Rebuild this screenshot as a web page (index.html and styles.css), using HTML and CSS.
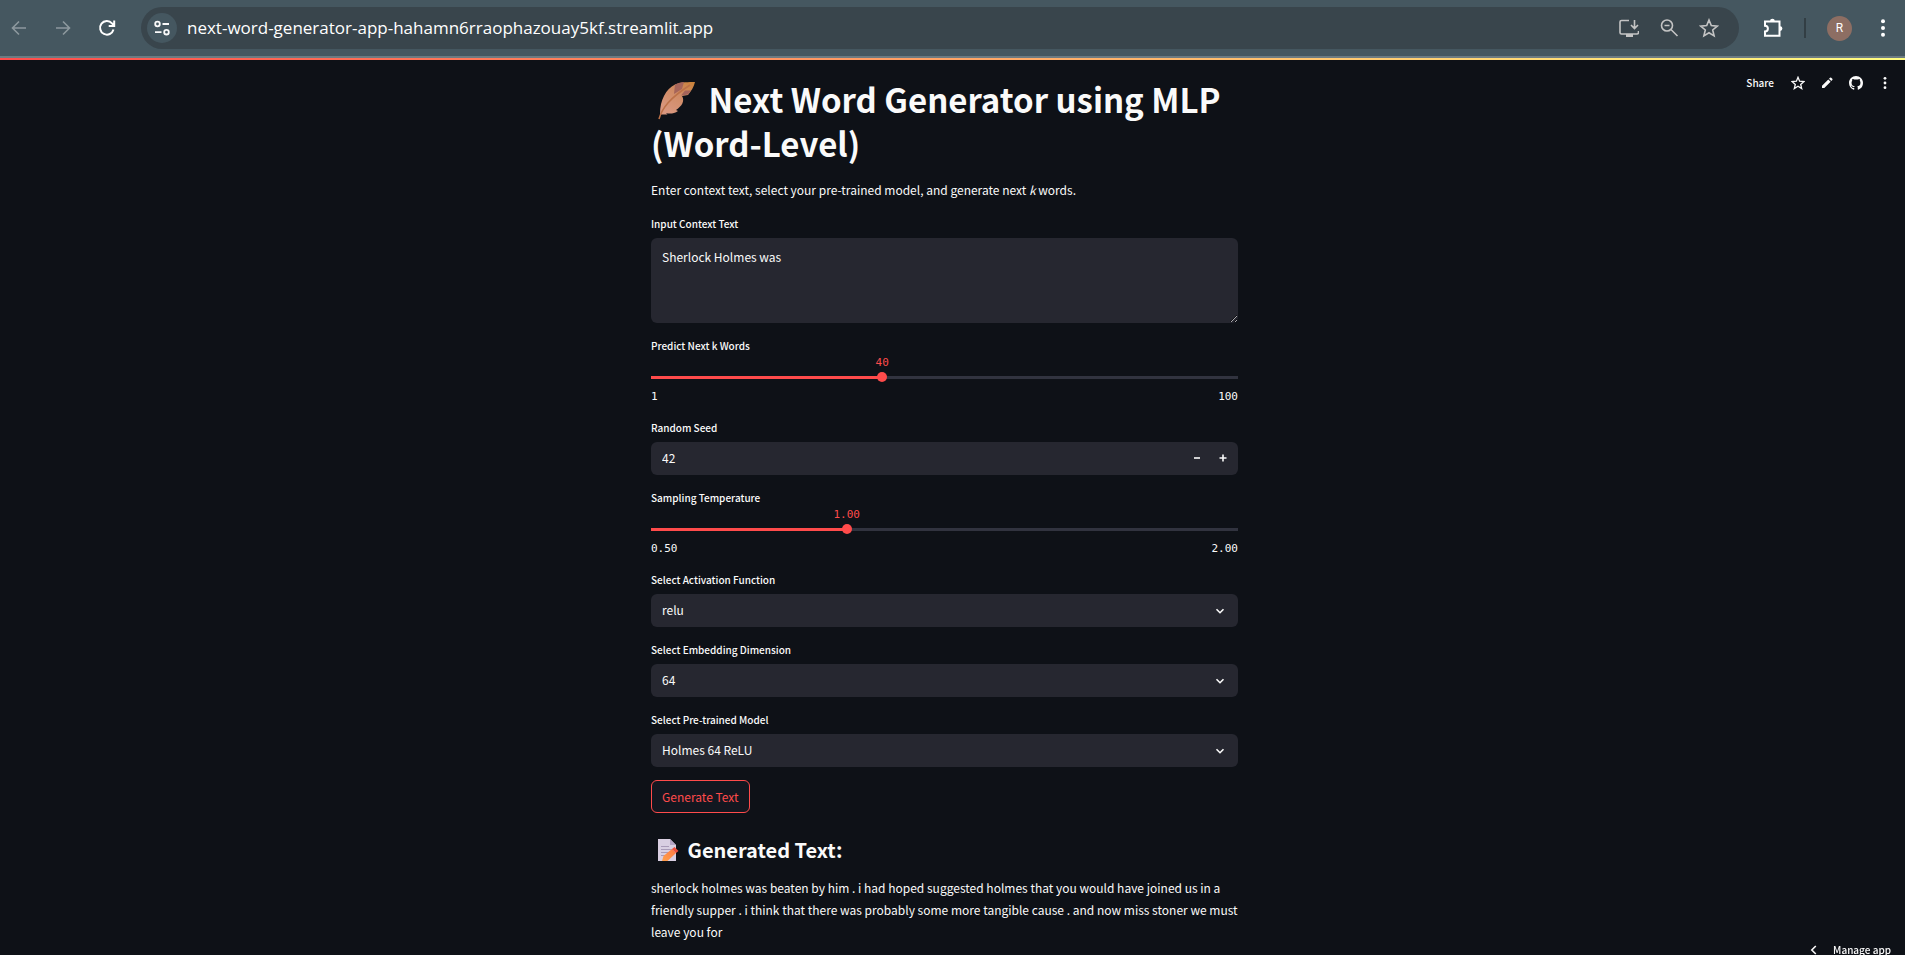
FILE: index.html
```html
<!DOCTYPE html>
<html lang="en">
<head>
<meta charset="utf-8">
<title>Next Word Generator</title>
<link rel="stylesheet" href="styles.css">
</head>
<body>
<header class="browser-bar">
  <nav class="nav-buttons" aria-label="Browser navigation">
    <button class="icon-button dim" aria-label="Back"><svg viewBox="0 0 20 20"><path d="M17 10H4M10 3.500 3.500 10l6.500 6.500"/></svg></button>
    <button class="icon-button dim" aria-label="Forward"><svg viewBox="0 0 20 20"><path d="M3 10h13M10 3.500 16.500 10 10 16.500"/></svg></button>
    <button class="icon-button" aria-label="Reload"><svg class="bold" viewBox="0 0 20 20"><path d="M16.500 11.500A6.800 6.800 0 1 1 15 5.300L17 7.500M17.200 2.500V8H11.700"/></svg></button>
  </nav>
  <div class="address-bar">
    <button class="site-info" aria-label="Site information"><svg viewBox="0 0 20 20"><circle cx="5.500" cy="6" r="2.300"/><path d="M10.500 6H17M3 14.200h6.500"/><circle cx="14.500" cy="14.200" r="2.300"/></svg></button>
    <input class="url" type="text" aria-label="Address" value="next-word-generator-app-hahamn6rraophazouay5kf.streamlit.app">
    <div class="address-actions">
      <button class="icon-button soft" aria-label="Install app"><svg viewBox="0 0 20 20"><path d="M10 2.500H2.500Q1 2.500 1 4v10.500Q1 16 2.500 16h15.500Q19.500 16 19.500 14.500V13M15.500 2v8M12 7l3.500 3.500L19 7"/><path class="solid" d="M7 16h7v3H7z"/></svg></button>
      <button class="icon-button soft" aria-label="Zoom"><svg viewBox="0 0 20 20"><circle cx="8" cy="7.500" r="5.500"/><path d="M5.500 7.500h5M12 11.500l6.500 6.500"/></svg></button>
      <button class="icon-button soft" aria-label="Bookmark"><svg viewBox="0 0 20 20"><path d="m10 2 2.300 5.600 6 .5-4.600 3.900 1.400 5.900L10 14.800l-5.100 3.100L6.300 12 1.700 8.100l6-.5z"/></svg></button>
    </div>
  </div>
  <div class="profile-tools">
    <button class="icon-button" aria-label="Extensions"><svg class="bold" viewBox="0 0 20 20"><path d="M2 3.500H16.500V17.800H2V13.500A2.900 2.900 0 0 0 2 7.700z"/><path class="solid" d="M7 3.200a2.400 2.400 0 0 1 4.800 0zM17 8.200a2.400 2.400 0 0 1 0 4.800z"/></svg></button>
    <span class="divider"></span>
    <button class="avatar" aria-label="Profile">R</button>
    <button class="icon-button" aria-label="Browser menu"><svg viewBox="0 0 20 20"><g class="solid"><circle cx="10" cy="3.200" r="2"/><circle cx="10" cy="10" r="2"/><circle cx="10" cy="16.800" r="2"/></g></svg></button>
  </div>
</header>
<div class="decoration"></div>

<div class="app">
  <div class="app-toolbar">
    <button class="share">Share</button>
    <button class="tool" aria-label="Favorite"><svg viewBox="0 0 14 14"><path d="m7 1.300 1.600 3.900 4.300.4-3.200 2.800 1 4.200L7 10.300l-3.700 2.300 1-4.200L1.100 5.600l4.300-.4z"/></svg></button>
    <button class="tool" aria-label="Edit"><svg viewBox="0 0 14 14"><path class="solid" d="M2 12V9.700L8.300 3.400l2.300 2.300L4.300 12zM9 2.700l1-1q.6-.6 1.200 0l1.100 1.100q.6.6 0 1.200l-1 1z"/></svg></button>
    <a class="tool" href="#source" aria-label="View source"><svg viewBox="0 0 16 16"><path class="solid" d="M8 0C3.580 0 0 3.580 0 8c0 3.540 2.290 6.530 5.470 7.590.4.070.55-.17.55-.38 0-.19-.01-.82-.01-1.490-2.010.37-2.530-.49-2.690-.94-.09-.23-.48-.94-.82-1.130-.28-.15-.68-.52-.01-.53.63-.01 1.080.58 1.230.82.72 1.210 1.870.87 2.330.66.07-.52.28-.87.51-1.070-1.780-.2-3.640-.89-3.640-3.950 0-.87.31-1.590.82-2.150-.08-.2-.36-1.020.08-2.120 0 0 .67-.21 2.200.82.64-.18 1.320-.27 2-.27s1.360.09 2 .27c1.530-1.040 2.200-.82 2.200-.82.44 1.100.16 1.920.08 2.120.51.56.82 1.270.82 2.150 0 3.070-1.870 3.750-3.650 3.950.29.25.54.73.54 1.480 0 1.070-.01 1.930-.01 2.200 0 .21.15.46.55.38A8.010 8.010 0 0 0 16 8c0-4.420-3.580-8-8-8z"/></svg></a>
    <button class="tool" aria-label="App menu"><svg viewBox="0 0 14 14"><g class="solid"><circle cx="7" cy="2.300" r="1.400"/><circle cx="7" cy="7" r="1.400"/><circle cx="7" cy="11.700" r="1.400"/></g></svg></button>
  </div>

  <main class="content">
    <h1 class="title"><svg class="feather" viewBox="0 0 48 40" aria-hidden="true">
      <defs>
        <linearGradient id="vane" x1="1" y1="0" x2="0.300" y2="1"><stop offset="0" stop-color="#c98236"/><stop offset=".4" stop-color="#cf8a62"/><stop offset="1" stop-color="#d9977f"/></linearGradient>
      </defs>
      <path d="M9 34C9 20 15 9 24 4.500 30 2 38 2 44 2c-1 5-4 9-7 13l-6 1c3 5 0 10-6 14l2 1c-4 3-9 3-12 2l1.500 1.500-6 0z" fill="url(#vane)"/>
      <path d="M24 4.500c3-1.500 6-2.300 9-2.500l-2 7-8 5z" fill="#a5645a"/><path d="M30 15.500l7-1 3-4-6 0z" fill="#a5645a"/>
      <path d="M8 39C11 28 19 18 39 5" fill="none" stroke="#bd7148" stroke-width="1.500"/>
    </svg> Next Word Generator using MLP (Word-Level)</h1>
    <p class="intro">Enter context text, select your pre-trained model, and generate next <em>k</em> words.</p>

    <form class="form">
      <div class="field">
        <label for="context">Input Context Text</label>
        <textarea id="context" class="box text-area">Sherlock Holmes was</textarea>
      </div>

      <div class="field">
        <label for="words">Predict Next k Words</label>
        <div class="slider" style="--fill: 39.39%">
          <output class="slider-value" for="words">40</output>
          <div class="track"><input id="words" type="range" min="1" max="100" value="40"></div>
          <div class="limits"><span>1</span><span>100</span></div>
        </div>
      </div>

      <div class="field">
        <label for="seed">Random Seed</label>
        <div class="box number">
          <input id="seed" type="text" inputmode="numeric" value="42">
          <button type="button" class="step" aria-label="Decrease"><svg viewBox="0 0 8 8"><path d="M1 4h6"/></svg></button>
          <button type="button" class="step" aria-label="Increase"><svg viewBox="0 0 8 8"><path d="M.5 4h7M4 .5v7"/></svg></button>
        </div>
      </div>

      <div class="field">
        <label for="temperature">Sampling Temperature</label>
        <div class="slider" style="--fill: 33.33%">
          <output class="slider-value" for="temperature">1.00</output>
          <div class="track"><input id="temperature" type="range" min="0.5" max="2" step="0.01" value="1"></div>
          <div class="limits"><span>0.50</span><span>2.00</span></div>
        </div>
      </div>

      <div class="field">
        <label for="activation">Select Activation Function</label>
        <div class="select-wrap">
          <select id="activation" class="box"><option>relu</option></select>
          <svg class="chevron" viewBox="0 0 10 10"><path d="m1.500 3.200 3.500 3.500 3.500-3.500"/></svg>
        </div>
      </div>

      <div class="field">
        <label for="embedding">Select Embedding Dimension</label>
        <div class="select-wrap">
          <select id="embedding" class="box"><option>64</option></select>
          <svg class="chevron" viewBox="0 0 10 10"><path d="m1.500 3.200 3.500 3.500 3.500-3.500"/></svg>
        </div>
      </div>

      <div class="field">
        <label for="model">Select Pre-trained Model</label>
        <div class="select-wrap">
          <select id="model" class="box"><option>Holmes 64 ReLU</option></select>
          <svg class="chevron" viewBox="0 0 10 10"><path d="m1.500 3.200 3.500 3.500 3.500-3.500"/></svg>
        </div>
      </div>

      <button type="button" class="generate">Generate Text</button>
    </form>

    <section>
      <h2 class="subtitle"><svg class="memo" viewBox="0 0 24 24" aria-hidden="true">
        <defs><linearGradient id="pencil" x1="1" y1="0" x2="0" y2="1"><stop offset="0" stop-color="#ff7a45"/><stop offset="1" stop-color="#ffa04a"/></linearGradient></defs>
        <path d="M1 1h12l6 6v16H1z" fill="#d9cfe2"/><path d="M13 1v6h6z" fill="#b3a4c4"/>
        <path d="M4 8.500h8M4 11.500h12M4 14.500h8M4 17.500h4" stroke="#a99bb8" stroke-width="1"/>
        <path d="M5 23l1.500-5L15 11l4 4-8.500 8z" fill="url(#pencil)"/><path d="M15 11l2.500-2 4 4-2.500 2z" fill="#f0503c"/>
      </svg> Generated Text:</h2>
      <p class="result">sherlock holmes was beaten by him . i had hoped suggested holmes that you would have joined us in a friendly supper . i think that there was probably some more tangible cause . and now miss stoner we must leave you for</p>
    </section>
  </main>
</div>

<button class="manage"><svg viewBox="0 0 10 10"><path d="M6.800 1 2.800 5l4 4"/></svg>Manage app</button>
</body>
</html>
```
FILE: styles.css
```css
* { box-sizing: border-box; }

:root {
  --text: #fafafa;
  --page: #0e1117;
  --field: #262730;
  --accent: #ff4b4b;
  --sans: "Noto Sans CJK SC", "Noto Sans", sans-serif;
  --mono: "DejaVu Sans Mono", monospace;
}

body {
  margin: 0;
  min-height: 100vh;
  overflow: hidden;
  background: var(--page);
  color: var(--text);
  font: 12px/22px var(--sans);
}

button, input, textarea, select { font: inherit; color: inherit; }
button { padding: 0; border: 0; background: none; cursor: pointer; }
svg { display: block; fill: none; }
button svg, .chevron { stroke: currentColor; stroke-width: 1.6; }
svg .solid { fill: currentColor; stroke: none; }
button .bold { stroke-width: 2; }

/* Browser bar */
.browser-bar {
  display: flex;
  align-items: center;
  gap: 24px;
  height: 58px;
  padding: 0 12px 0 9px;
  background: #455760;
  border-bottom: 2px solid #6c7b82;
}
.nav-buttons { display: flex; gap: 24px; }
.icon-button { width: 20px; height: 20px; color: #ffffff; }
.icon-button.dim { color: #8d989e; }
.icon-button.soft { color: #c4c4c4; }
.address-bar {
  display: flex;
  flex: 1;
  align-items: center;
  height: 42px;
  padding: 0 20px 0 6px;
  border-radius: 21px;
  background: #39454c;
}
.site-info {
  display: grid;
  place-items: center;
  width: 30px;
  height: 30px;
  border-radius: 50%;
  background: #455760;
}
.site-info svg { width: 20px; height: 20px; stroke-width: 1.8; }
.url {
  flex: 1;
  min-width: 0;
  padding: 0 0 0 10px;
  border: 0;
  background: none;
  color: #ffffff;
  font: 17px/24px "Open Sans", "Noto Sans", sans-serif;
}
.address-actions { display: flex; gap: 20px; }
.profile-tools { display: flex; align-items: center; gap: 21px; }
.divider { width: 2px; height: 20px; background: #323e44; }
.avatar {
  width: 25px;
  height: 25px;
  border-radius: 50%;
  background: #8d6e63;
  color: #ffffff;
  font: 12px/25px Roboto, sans-serif;
}
.decoration { height: 2px; background: linear-gradient(90deg, #ff4b4b, #fffd80); }

/* App */
.app { position: relative; padding: 16px 16px 0 0; }
.app-toolbar {
  position: absolute;
  top: 12px;
  right: 13px;
  display: flex;
  align-items: center;
  gap: 15px;
  font-size: 10px;
  font-weight: 500;
}
.share { margin-right: 2px; line-height: 22px; }
.tool { width: 14px; height: 14px; color: var(--text); }
.tool svg { width: 14px; height: 14px; stroke-width: 1.3; }

.content { width: 100%; max-width: 587px; margin: 0 auto; }
.title {
  margin: 0;
  padding: 1px 0 14px;
  font-size: 33px;
  line-height: 44px;
  font-weight: 700;
}
.feather { display: inline-block; width: 48px; height: 40px; margin-right: 2px; vertical-align: -7px; }
.intro { margin: 0 0 13px; line-height: 22px; }
.intro em { font-style: italic; }

.form { display: flex; flex-direction: column; align-items: stretch; gap: 13px; }
.field label { display: block; margin-bottom: 4px; font-size: 10px; font-weight: 500; line-height: 20px; }
.box {
  display: block;
  width: 100%;
  height: 33px;
  padding: 0 11px 2px;
  border: 0;
  border-radius: 6px;
  background: var(--field);
  line-height: 22px;
  appearance: none;
}
.text-area { height: 85px; padding: 8px 11px; resize: vertical; color-scheme: dark; }

.slider { margin-top: -4px; font: 11px/14px var(--mono); }
.slider-value { display: block; width: max-content; margin-left: var(--fill); transform: translateX(-50%); color: var(--accent); }
.track {
  height: 14px;
  background: linear-gradient(90deg, var(--accent) var(--fill), #31333f var(--fill)) center / 100% 3px no-repeat;
}
.track input {
  display: block;
  width: calc(100% + 10px);
  height: 14px;
  margin: 0 -5px;
  background: none;
  appearance: none;
}
.track input::-webkit-slider-thumb {
  width: 10px;
  height: 10px;
  border-radius: 50%;
  background: var(--accent);
  appearance: none;
}
.limits { display: flex; justify-content: space-between; margin-top: 5px; line-height: 16px; }

.number { display: flex; align-items: center; padding-right: 2px; }
.number input { flex: 1; min-width: 0; padding: 0; border: 0; background: none; }
.step { display: grid; place-items: center; width: 26px; height: 31px; }
.step svg { width: 8px; height: 8px; }

.select-wrap { display: grid; align-items: center; }
.select-wrap > * { grid-area: 1 / 1; }
.chevron { justify-self: end; width: 10px; height: 10px; margin-right: 13px; pointer-events: none; }

.generate {
  align-self: flex-start;
  height: 33px;
  padding: 0 10px;
  border: 1px solid var(--accent);
  border-radius: 6px;
  background: #131720;
  color: var(--accent);
}

.subtitle { margin: 0; padding: 23px 0 13px; font-size: 20px; line-height: 28px; font-weight: 700; }
.memo { display: inline-block; width: 24px; height: 24px; margin: 0 2px 0 6px; vertical-align: -4px; }
.result { margin: 0; line-height: 22px; }

.manage {
  position: fixed;
  right: 14px;
  bottom: -6px;
  display: flex;
  align-items: center;
  gap: 14px;
  font-size: 10px;
  font-weight: 500;
  line-height: 22px;
}
.manage svg { width: 10px; height: 10px; }
```
